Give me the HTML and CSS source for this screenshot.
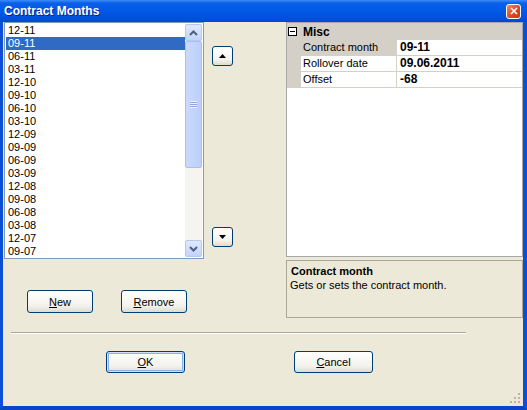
FILE: index.html
```html
<!DOCTYPE html>
<html lang="en">
<head>
    <meta charset="UTF-8">
    <title>Contract Months</title>
    <link rel="stylesheet" href="styles.css">
</head>
<body>
    <div class="window">
        <div class="titlebar">
            <span class="title">Contract Months</span>
            <span class="close-btn">
                <svg width="8" height="8" viewBox="0 0 8 8"><path d="M1 1L7 7M7 1L1 7" stroke="#fff" stroke-width="1.6"/></svg>
            </span>
        </div>

        <div class="client">
            <div class="main-row">
                <div class="left-col">
                    <div class="listbox">
                        <ul class="items">
                            <li>12-11</li>
                            <li class="selected">09-11</li>
                            <li>06-11</li>
                            <li>03-11</li>
                            <li>12-10</li>
                            <li>09-10</li>
                            <li>06-10</li>
                            <li>03-10</li>
                            <li>12-09</li>
                            <li>09-09</li>
                            <li>06-09</li>
                            <li>03-09</li>
                            <li>12-08</li>
                            <li>09-08</li>
                            <li>06-08</li>
                            <li>03-08</li>
                            <li>12-07</li>
                            <li>09-07</li>
                        </ul>
                        <div class="vscroll">
                            <div class="sb-btn">
                                <svg width="9" height="6" viewBox="0 0 9 6"><path d="M1 5L4.5 1.5L8 5" fill="none" stroke="#4d6185" stroke-width="2"/></svg>
                            </div>
                            <div class="sb-thumb"><span class="grip"></span></div>
                            <div class="sb-track"></div>
                            <div class="sb-btn">
                                <svg width="9" height="6" viewBox="0 0 9 6"><path d="M1 1L4.5 4.5L8 1" fill="none" stroke="#4d6185" stroke-width="2"/></svg>
                            </div>
                        </div>
                    </div>
                    <div class="list-buttons">
                        <button class="btn"><u>N</u>ew</button>
                        <button class="btn"><u>R</u>emove</button>
                    </div>
                </div>

                <div class="move-col">
                    <button class="btn arrow-btn">
                        <svg width="7" height="4" viewBox="0 0 7 4"><path d="M0 4L3.5 0L7 4Z" fill="#000"/></svg>
                    </button>
                    <button class="btn arrow-btn">
                        <svg width="7" height="4" viewBox="0 0 7 4"><path d="M0 0L3.5 4L7 0Z" fill="#000"/></svg>
                    </button>
                </div>

                <div class="right-col">
                    <div class="propgrid">
                        <div class="pg-category">
                            <span class="pg-toggle">
                                <svg width="9" height="9" viewBox="0 0 9 9"><rect x="0.5" y="0.5" width="8" height="8" fill="#fff" stroke="#000"/><path d="M2 4.5H7" stroke="#000"/></svg>
                            </span>
                            <span class="pg-cat-name">Misc</span>
                        </div>
                        <div class="pg-row selected">
                            <span class="pg-name">Contract month</span>
                            <span class="pg-value">09-11</span>
                        </div>
                        <div class="pg-row">
                            <span class="pg-name">Rollover date</span>
                            <span class="pg-value">09.06.2011</span>
                        </div>
                        <div class="pg-row">
                            <span class="pg-name">Offset</span>
                            <span class="pg-value">-68</span>
                        </div>
                    </div>
                    <div class="pg-help">
                        <div class="help-title">Contract month</div>
                        <div class="help-text">Gets or sets the contract month.</div>
                    </div>
                </div>
            </div>

            <div class="separator"></div>

            <div class="dialog-buttons">
                <button class="btn btn-wide default"><u>O</u>K</button>
                <button class="btn btn-wide"><u>C</u>ancel</button>
            </div>

            <svg class="size-grip" width="11" height="11" viewBox="0 0 11 11">
                <g fill="#b9b6a6">
                    <rect x="8" y="0" width="2" height="2"/>
                    <rect x="4" y="4" width="2" height="2"/>
                    <rect x="8" y="4" width="2" height="2"/>
                    <rect x="0" y="8" width="2" height="2"/>
                    <rect x="4" y="8" width="2" height="2"/>
                    <rect x="8" y="8" width="2" height="2"/>
                </g>
            </svg>
        </div>
    </div>
</body>
</html>
```

FILE: styles.css
```css
* {
    box-sizing: border-box;
}
body {
    margin: 0;
    font-family: "Liberation Sans", Arial, sans-serif;
    font-size: 11px;
    color: #000;
}

/* window frame */
.window {
    width: 527px;
    height: 410px;
    background-color: #0a50dc;
    border-left: 3px solid #0a4fd6;
    border-right: 4px solid #0a4fd6;
    border-bottom: 4px solid #0a44c8;
    display: flex;
    flex-direction: column;
}
.titlebar {
    height: 22px;
    margin: 0 -4px 0 -3px;
    padding: 0 6px 0 4px;
    display: flex;
    align-items: center;
    justify-content: space-between;
    background: linear-gradient(#3d8ef8 0, #0b60ea 3px, #0058e6 12px, #004fdc 19px, #0048d2 22px);
}
.title {
    color: #fff;
    font-weight: bold;
    font-size: 12px;
    text-shadow: 1px 1px #0a1f8a;
}
.close-btn {
    width: 15px;
    height: 15px;
    border: 1px solid #fff;
    border-radius: 3px;
    background: linear-gradient(135deg, #f0876a, #d9461f 60%, #c4391a);
    display: flex;
    align-items: center;
    justify-content: center;
}

.client {
    flex: 1;
    position: relative;
    background-color: #ece9d8;
}

.main-row {
    display: flex;
    align-items: flex-start;
}

/* month list */
.left-col {
    margin-left: 1px;
    width: 200px;
}
.listbox {
    height: 237px;
    border: 1px solid #7f9db9;
    padding: 1px;
    background-color: #fff;
    display: flex;
}
.items {
    flex: 1;
    margin: 0;
    padding: 0;
    list-style: none;
    overflow: hidden;
}
.items li {
    height: 13px;
    line-height: 13px;
    padding-left: 2px;
}
.items li.selected {
    background-color: #316ac5;
    color: #fff;
}

.vscroll {
    width: 17px;
    display: flex;
    flex-direction: column;
    background-color: #f5f4ef;
}
.sb-btn {
    height: 17px;
    border: 1px solid #b4c8f6;
    border-radius: 2px;
    background: linear-gradient(#e0e9fd, #c3d3fc);
    display: flex;
    align-items: center;
    justify-content: center;
}
.sb-thumb {
    height: 127px;
    border: 1px solid #a8bff4;
    border-radius: 2px;
    background: linear-gradient(90deg, #cbd9fd, #bccff9);
    display: flex;
    align-items: center;
    justify-content: center;
}
.grip {
    width: 7px;
    height: 7px;
    background: repeating-linear-gradient(#eef3fe 0 1px, #8ca6e4 1px 2px);
}
.sb-track {
    flex: 1;
}

.list-buttons {
    display: flex;
    gap: 28px;
    margin-top: 31px;
    padding-left: 23px;
}

/* xp push buttons */
.btn {
    width: 66px;
    height: 23px;
    padding: 0;
    font-family: inherit;
    font-size: 11px;
    color: #000;
    border: 1px solid #003c74;
    border-radius: 3px;
    background: linear-gradient(#ffffff, #f3f2ec 70%, #dedbd0);
    display: flex;
    align-items: center;
    justify-content: center;
}
.arrow-btn {
    width: 21px;
    height: 20px;
}
.btn-wide {
    width: 79px;
    height: 22px;
}
.btn.default {
    box-shadow: inset 0 0 0 1px #cee0fa, inset 0 0 0 2px #8cb0ea;
}

.move-col {
    margin-left: 8px;
    padding-top: 24px;
    display: flex;
    flex-direction: column;
    gap: 161px;
}

/* property grid */
.right-col {
    margin-left: 53px;
    width: 237px;
}
.propgrid {
    height: 235px;
    border: 1px solid #a7a6aa;
    background-color: #fff;
}
.pg-category {
    height: 17px;
    display: flex;
    align-items: center;
    background-color: #d4d0c8;
}
.pg-toggle {
    width: 14px;
    padding-left: 1px;
    display: flex;
}
.pg-cat-name {
    padding-left: 2px;
    font-size: 12px;
    font-weight: bold;
}
.pg-row {
    height: 16px;
    display: flex;
    border-left: 14px solid #d4d0c8;
    border-bottom: 1px solid #d4d0c8;
}
.pg-name {
    width: 96px;
    padding-left: 2px;
    line-height: 15px;
    border-right: 1px solid #d4d0c8;
}
.pg-row.selected .pg-name {
    background-color: #d4d0c8;
}
.pg-value {
    flex: 1;
    padding-left: 3px;
    line-height: 15px;
    font-size: 12px;
    font-weight: bold;
}

.pg-help {
    margin-top: 3px;
    height: 58px;
    border: 1px solid #aca899;
    padding: 3px 4px 3px 3px;
}
.help-title {
    padding-left: 1px;
    font-weight: bold;
    line-height: 14px;
}
.help-text {
    line-height: 15px;
}

.separator {
    margin: 14px 0 0 8px;
    width: 455px;
    height: 2px;
    border-top: 1px solid #aca899;
    border-bottom: 1px solid #fff;
}

.dialog-buttons {
    display: flex;
    gap: 109px;
    margin-top: 17px;
    padding-left: 103px;
}

/* resize corner */
.size-grip {
    position: absolute;
    right: 2px;
    bottom: 2px;
}
```
